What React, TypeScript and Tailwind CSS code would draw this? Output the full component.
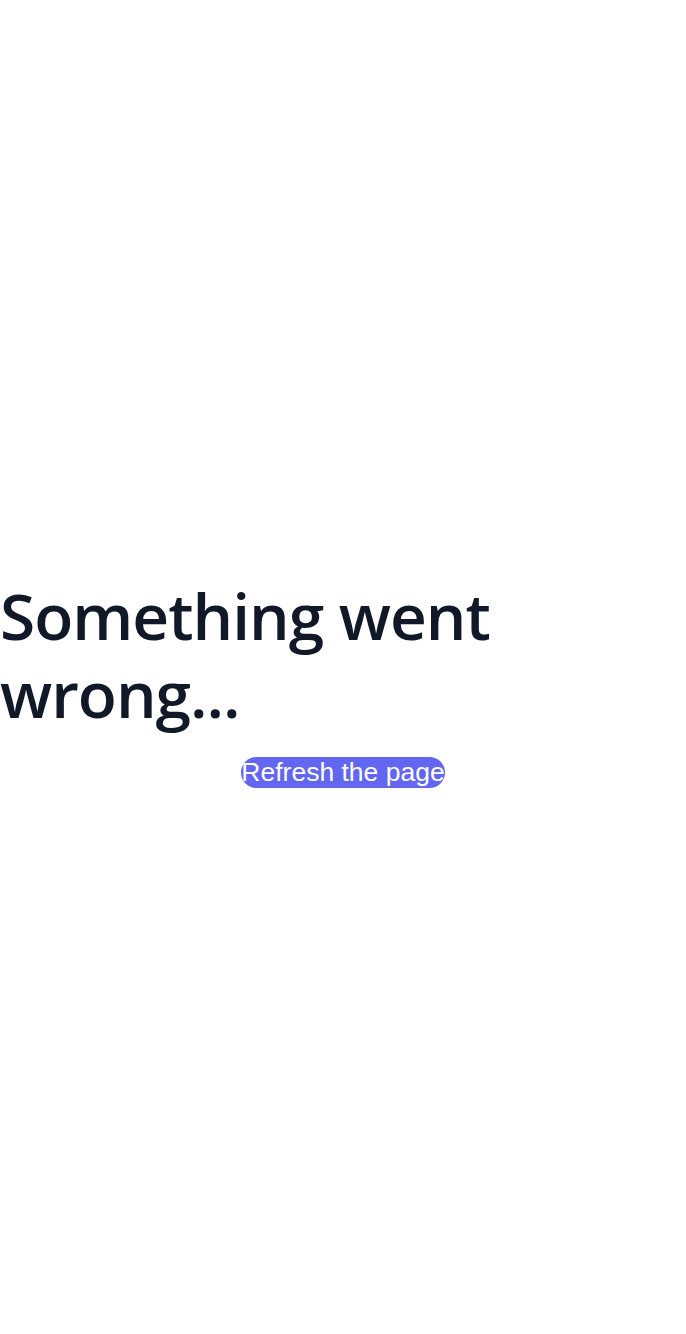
import React from "react";

const App: React.FC = () => {
  return (
    <div className="min-h-screen bg-white flex flex-col justify-center pt-[30px]">
      <h1
        className="text-[64px] leading-[78px] font-semibold text-[#111827] tracking-[-1px]"
        style={{ fontFamily: "'Open Sans', sans-serif" }}
      >
        Something went wrong...
      </h1>
      <div className="flex justify-center mt-[24px]">
        <button
          onClick={() => window.location.reload()}
          className="bg-[#6366f1] text-white rounded-full text-[26.5px] leading-[31px] h-[31px]"
          style={{ fontFamily: "'Liberation Sans', Arial, sans-serif" }}
        >
          Refresh the page
        </button>
      </div>
    </div>
  );
};

export default App;
